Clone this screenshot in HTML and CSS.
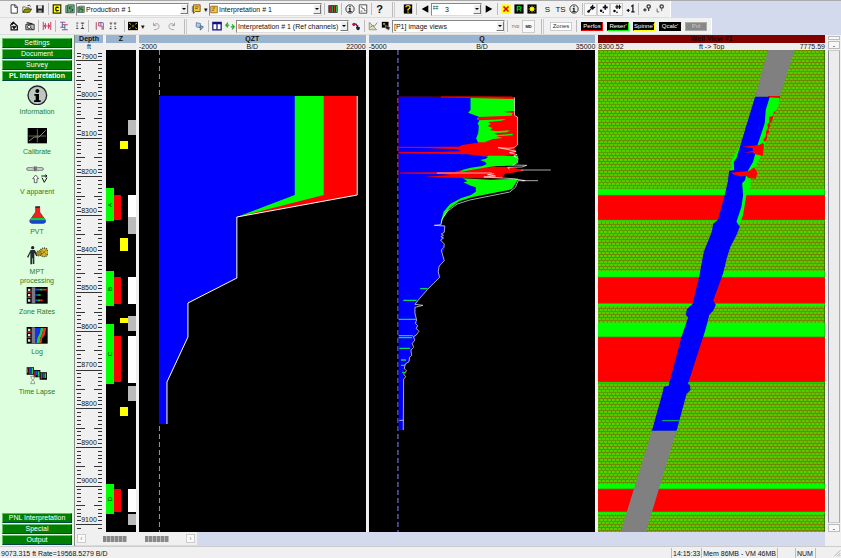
FILE: index.html
```html
<!DOCTYPE html>
<html lang="en">
<head>
    <meta charset="UTF-8">
    <meta name="viewport" content="width=device-width, initial-scale=1.0">
    <title>PL Interpretation</title>
    <link rel="stylesheet" href="styles.css">
</head>
<body>
    <div class="toolbars">
        <div class="toolbar">
            <button class="tool" aria-label="New"><svg viewBox="0 0 24 24"><path d="M5 2h10l5 5v15H5z" fill="#fff" stroke="#222" stroke-width="2"/><path d="M14 2v6h6" fill="none" stroke="#222" stroke-width="2"/></svg></button>
            <button class="tool" aria-label="Open"><svg viewBox="0 0 24 24"><path d="M2 20V7h6l2 2h7v4" fill="#ff9" stroke="#554" stroke-width="2"/><path d="M2 20l5-8h16l-5 8z" fill="#990" stroke="#330" stroke-width="2"/><path d="M13 4q5-3 8 2" fill="none" stroke="#222" stroke-width="2"/></svg></button>
            <button class="tool" aria-label="Save"><svg viewBox="0 0 24 24"><path d="M3 3h18v18H3z" fill="#222"/><path d="M7 3h10v8H7z" fill="#ddd"/><path d="M8 15h8v6H8z" fill="#999"/></svg></button>
            <span class="sep"></span>
            <button class="tool" aria-label="Company"><svg viewBox="0 0 24 24"><path d="M3 2h18v20H3z" fill="#ff0" stroke="#330" stroke-width="3"/><path d="M16 9q-7-4-7 3t7 3" fill="none" stroke="#000" stroke-width="3"/></svg></button>
            <button class="tool" aria-label="Survey"><svg viewBox="0 0 24 24"><path d="M2 4h4v17H2zM7 2h15v19H7z" fill="#7b8" stroke="#354" stroke-width="2"/><path d="M18 7h-7v5h7v5h-7" fill="none" stroke="#132" stroke-width="2"/></svg></button>
            <div class="combo combo-wide">
                <svg viewBox="0 0 24 24"><path d="M2 4h4v17H2zM7 2h15v19H7z" fill="#7b8" stroke="#354" stroke-width="2"/><path d="M18 7h-7v5h7v5h-7" fill="none" stroke="#132" stroke-width="2"/></svg>
                <select aria-label="Production survey"><option>Production # 1</option></select>
                <span class="arrow"></span>
            </div>
            <button class="tool" aria-label="Interpretations"><svg viewBox="0 0 24 24"><path d="M2 5h4v15H2z" fill="#888"/><path d="M6 2h16v16H10l-4 5z" fill="#ec3" stroke="#742" stroke-width="2"/><path d="M10 7h8M10 11h6" stroke="#742" stroke-width="2"/></svg></button>
            <button class="tool tool-drop" aria-label="More">▾</button>
            <div class="combo combo-wide">
                <svg viewBox="0 0 24 24"><path d="M2 2h20v20H2z" fill="#ec3" stroke="#742" stroke-width="2"/><path d="M8 5h8M7 10h8M6 15h6" stroke="#742" stroke-width="2"/></svg>
                <select aria-label="Interpretation"><option>Interpretation # 1</option></select>
                <span class="arrow"></span>
            </div>
            <span class="sep"></span>
            <button class="tool" aria-label="Tracks"><svg viewBox="0 0 24 24"><path d="M1 3h22v18H1z" fill="#111"/><path d="M5 5v14M15 5v14" stroke="#e33" stroke-width="3"/><path d="M10 5v14M20 5v14" stroke="#2c4" stroke-width="3"/></svg></button>
            <span class="sep"></span>
            <button class="tool" aria-label="Information"><svg viewBox="0 0 24 24"><circle cx="12" cy="12" r="10" fill="#eee" stroke="#222" stroke-width="2"/><path d="M12 5v3M9 11h3v7M8 18h8" fill="none" stroke="#222" stroke-width="3"/></svg></button>
            <button class="tool" aria-label="Report"><svg viewBox="0 0 24 24"><path d="M3 2h18v20H3z" fill="#fff" stroke="#333" stroke-width="2"/><path d="M6 7h4v4h5v5h4M6 17h5" fill="none" stroke="#555" stroke-width="2"/></svg></button>
            <span class="sep"></span>
            <button class="tool tool-glyph" aria-label="Help">?</button>
            <span class="grip"></span>
            <button class="tool" aria-label="What is this"><svg viewBox="0 0 24 24"><path d="M2 1h20v22H2z"/><path d="M7 8q0-4 5-4t5 4q0 3-5 5v3M12 18v3" fill="none" stroke="#fd0" stroke-width="3"/></svg></button>
            <span class="sep"></span>
            <button class="tool" aria-label="Previous"><svg viewBox="0 0 24 24"><path d="M20 3v18L4 12z"/></svg></button>
            <div class="combo combo-small">
                <svg viewBox="0 0 24 24"><path d="M3 3h16M3 9h16M6 0v13M15 0v13" stroke="#277" stroke-width="2"/></svg>
                <select aria-label="View number"><option>&nbsp; 3</option></select>
                <span class="arrow"></span>
            </div>
            <button class="tool" aria-label="Next"><svg viewBox="0 0 24 24"><path d="M4 3v18l16-9z"/></svg></button>
            <span class="sep"></span>
            <button class="tool" aria-label="Clear"><svg viewBox="0 0 24 24"><path d="M1 1h22v22H1z" fill="#ff0"/><path d="M6 6l12 12M18 6L6 18" stroke="#e00" stroke-width="4"/></svg></button>
            <button class="tool" aria-label="Rates"><svg viewBox="0 0 24 24"><path d="M1 1h22v22H1z"/><path d="M8 18V6h6q3 0 3 3t-3 3H8m5 0l4 6" fill="none" stroke="#0c2" stroke-width="3"/></svg></button>
            <button class="tool" aria-label="Highlight"><svg viewBox="0 0 24 24"><path d="M1 1h22v22H1z"/><path d="M12 4v16M4 12h16M6 6l12 12M18 6L6 18" stroke="#fe0" stroke-width="2"/><circle cx="12" cy="12" r="5" fill="#ff0"/></svg></button>
            <span class="gap"></span>
            <button class="tool tool-text">S</button>
            <button class="tool tool-text">TS</button>
            <button class="tool" aria-label="Details"><svg viewBox="0 0 24 24"><circle cx="12" cy="12" r="10" fill="#eee" stroke="#222" stroke-width="2"/><path d="M12 5v3M9 11h3v7M8 18h8" fill="none" stroke="#222" stroke-width="3"/></svg></button>
            <span class="sep"></span>
            <button class="tool pressed" aria-label="Add point"><svg viewBox="0 0 24 24"><circle cx="6" cy="18" r="3"/><path d="M6 18l8-8M10 8h12M16 2v12M13 5l6 6" stroke="#112" stroke-width="3"/></svg></button>
            <button class="tool pressed" aria-label="Move point"><svg viewBox="0 0 24 24"><circle cx="5" cy="16" r="3"/><path d="M9 8h12M15 2v12" stroke="#112" stroke-width="4"/><circle cx="10" cy="20" r="2"/></svg></button>
            <button class="tool pressed" aria-label="Add points"><svg viewBox="0 0 24 24"><circle cx="6" cy="17" r="3"/><path d="M8 7h14M12 2v10M18 2v10" stroke="#112" stroke-width="3"/><circle cx="12" cy="20" r="2"/></svg></button>
            <button class="tool" aria-label="Single point"><svg viewBox="0 0 24 24"><path d="M4 15h7M8 12v7" stroke="#112" stroke-width="3"/><path d="M15 6l4-3v16M15 19h8" fill="none" stroke="#112" stroke-width="3"/></svg></button>
            <span class="sep"></span>
            <button class="tool" aria-label="Lock point"><svg viewBox="0 0 24 24"><circle cx="16" cy="6" r="4" fill="none" stroke="#333" stroke-width="3"/><path d="M16 10v7M3 14h8M7 10v8" stroke="#333" stroke-width="3"/></svg></button>
            <button class="tool" aria-label="Unlock point"><svg viewBox="0 0 24 24"><circle cx="16" cy="6" r="4" fill="none" stroke="#333" stroke-width="3"/><path d="M16 10v7M5 11v8h5" fill="none" stroke="#555" stroke-width="2"/></svg></button>
        </div>
        <div class="toolbar">
            <button class="tool" aria-label="Load log"><svg viewBox="0 0 24 24"><path d="M3 11l7-8 10 9v9H5v-9" fill="#eee" stroke="#111" stroke-width="3"/><path d="M4 4l6 6M8 13h9l-5 6z" stroke="#111" stroke-width="2"/></svg></button>
            <span class="gap"></span>
            <button class="tool" aria-label="Browse data"><svg viewBox="0 0 24 24"><path d="M2 8h20v13H2z" fill="#bbb" stroke="#222" stroke-width="2"/><path d="M4 4l14 3" stroke="#222" stroke-width="3"/><circle cx="10" cy="14" r="4" fill="#fff" stroke="#222" stroke-width="2"/><path d="M14 17l5 4" stroke="#222" stroke-width="2"/></svg></button>
            <span class="sep"></span>
            <button class="tool" aria-label="Edit width"><svg viewBox="0 0 24 24"><path d="M3 2v20M21 2v20M8 5v14M16 5v14" stroke="#b24" stroke-width="2"/><path d="M4 12h16M9 8l-4 4 4 4M15 8l4 4-4 4" fill="none" stroke="#c35" stroke-width="2"/></svg></button>
            <span class="sep"></span>
            <button class="tool" aria-label="Depth match"><svg viewBox="0 0 24 24"><path d="M3 3h12M7 9h14M3 15h12M7 21h14" stroke="#a24" stroke-width="2"/><path d="M8 3v12M14 9v12" stroke="#36a" stroke-width="2"/></svg></button>
            <span class="gap"></span>
            <button class="tool" aria-label="Shift"><svg viewBox="0 0 24 24"><path d="M3 5h5M3 18h5M14 5h8M14 18h8" stroke="#222" stroke-width="2"/><path d="M5 9v6M18 6v11" stroke="#222" stroke-width="3" stroke-dasharray="2 2"/></svg></button>
            <span class="sep"></span>
            <span class="gap"></span>
            <button class="tool" aria-label="Stations"><svg viewBox="0 0 24 24"><path d="M3 3v18M9 3v9h8v9" fill="none" stroke="#a24" stroke-width="2"/><path d="M14 3v8M20 5v16M9 4h11" stroke="#649" stroke-width="2"/></svg></button>
            <button class="tool" aria-label="Pairs"><svg viewBox="0 0 24 24"><path d="M4 5h6M14 5h6M4 18h4M16 18h4" stroke="#222" stroke-width="2"/><path d="M7 6v14M17 6v14" stroke="#222" stroke-width="2" stroke-dasharray="3 3"/></svg></button>
            <span class="gap"></span>
            <span class="sep"></span>
            <button class="tool" aria-label="Zones"><svg viewBox="0 0 24 24"><path d="M0 2h24v20H0z"/><path d="M2 5l5 3M22 5l-5 3M2 19l5-3M22 19l-5-3" stroke="#ec0" stroke-width="2"/><path d="M9 9h6v6H9z" fill="#750"/></svg></button>
            <button class="tool tool-drop" aria-label="More">▾</button>
            <span class="gap"></span>
            <button class="tool" aria-label="Undo"><svg viewBox="0 0 24 24"><path d="M6 4v7h7M6 10q10-8 13 1t-12 10" fill="none" stroke="#999" stroke-width="2"/></svg></button>
            <span class="gap"></span>
            <button class="tool" aria-label="Redo"><svg viewBox="0 0 24 24"><path d="M18 4v7h-7M18 10Q8 2 5 11t12 10" fill="none" stroke="#999" stroke-width="2"/></svg></button>
            <span class="grip"></span>
            <button class="tool" aria-label="Templates"><svg viewBox="0 0 24 24"><path d="M3 4l10 2v10L3 14z" fill="#bcd" stroke="#57a" stroke-width="2"/><path d="M12 11l8 3-7 8z" fill="#8ac" stroke="#468" stroke-width="2"/></svg></button>
            <span class="sep"></span>
            <button class="tool" aria-label="Views"><svg viewBox="0 0 24 24"><path d="M2 3h20v18H2z" fill="#fff" stroke="#118" stroke-width="3"/><path d="M12 3v18M2 6h20" stroke="#118" stroke-width="3"/></svg></button>
            <button class="tool" aria-label="Refresh"><svg viewBox="0 0 24 24"><path d="M2 10h8M7 4l-5 6 5 5M22 14h-8M17 8l5 6-5 6" fill="none" stroke="#2a2" stroke-width="3"/></svg></button>
            <div class="combo combo-wide">
                <select aria-label="Reference channels"><option>Interpretation # 1 (Ref channels)</option></select>
                <span class="arrow"></span>
            </div>
            <button class="tool" aria-label="Link"><svg viewBox="0 0 24 24"><circle cx="7" cy="8" r="4" fill="#b13"/><path d="M11 6l5 8M16 10v11M12 16h9" stroke="#224" stroke-width="3"/><circle cx="17" cy="18" r="4" fill="#224"/></svg></button>
            <span class="sep"></span>
            <button class="tool" aria-label="Plot"><svg viewBox="0 0 24 24"><path d="M3 3v18h18z" fill="#dda" stroke="#888" stroke-width="2"/><path d="M6 15l6-5 3 3 7-9" fill="none" stroke="#57a" stroke-width="2"/></svg></button>
            <button class="tool" aria-label="Snapshot"><svg viewBox="0 0 24 24"><path d="M2 2h16v14H2z"/><path d="M5 5h5v4H5z" fill="#ba3"/><path d="M10 10l12 5-3 7-8-4z" fill="#222" stroke="#ddd"/></svg></button>
            <div class="combo combo-wide">
                <select aria-label="Image views"><option>[P1] image views</option></select>
                <span class="arrow"></span>
            </div>
            <span class="sep"></span>
            <button class="tool tool-mini off">TVD</button>
            <button class="tool tool-mini pressed">MD</button>
            <span class="grip"></span>
            <div class="tags">
                <button class="tag tag-zones">Zones</button>
                <span class="sep"></span>
                <button class="tag tag-red">Perfos</button>
                <button class="tag tag-green">Reser'</button>
                <button class="tag tag-yellow">Spinne'</button>
                <button class="tag">Qcalc'</button>
                <button class="tag tag-off">Pnl</button>
            </div>
        </div>
    </div>

    <div class="main">
        <nav class="sidebar">
            <button class="group">Settings</button>
            <button class="group">Document</button>
            <button class="group">Survey</button>
            <button class="group active">PL Interpretation</button>
            <div class="shortcuts">
                <a class="shortcut" href="#">
                    <svg viewBox="0 0 66 60"><circle cx="34" cy="31" r="28" fill="#bcc8bc" stroke="#223" stroke-width="4"/><circle cx="34" cy="18" r="6"/><path d="M25 27h14v19h5v5H24v-5h5V32h-4z"/></svg>
                    Information
                </a>
                <a class="shortcut" href="#">
                    <svg viewBox="0 0 66 60"><path d="M5 9h58v46H5z"/><path d="M8 33h52M34 12v40" stroke="#999" stroke-width="2"/><path d="M9 48l16-12h14l20-20" fill="none" stroke="#986" stroke-width="3"/></svg>
                    Calibrate
                </a>
                <a class="shortcut" href="#">
                    <svg viewBox="0 0 66 60"><rect x="2" y="8" width="50" height="8" rx="4" fill="#ddd" stroke="#444" stroke-width="2"/><path d="M20 5h14v14H20z" fill="#aaa"/><path d="M26 4v14M30 4v14" stroke="#333" stroke-width="2"/><path d="M29 30l9 11h-5v12h-8V41h-5z" fill="#fff" stroke="#222" stroke-width="2"/><path d="M48 38l7 14 8-14M46 33h17M58 29l5 4-5 4" fill="none" stroke="#111" stroke-width="3"/></svg>
                    V apparent
                </a>
                <a class="shortcut" href="#">
                    <svg viewBox="0 0 66 60"><path d="M29 6h12v15l17 24q2 10-6 10H18q-8 0-6-10l17-24z" fill="#e22" stroke="#622" stroke-width="2"/><path d="M16 39h39l4 8H11z" fill="#1c3"/><path d="M11 46h48q1 9-7 9H18q-8 0-7-9z" fill="#14d"/><path d="M28 6h14" stroke="#222" stroke-width="4"/></svg>
                    PVT
                </a>
                <a class="shortcut" href="#">
                    <svg viewBox="0 0 66 60"><circle cx="20" cy="8" r="5" fill="#222"/><path d="M14 15h13l8 17-4 2-6-11v34h-5V40h-2v18h-5V24L7 38l-4-2z" fill="#243030"/><circle cx="54" cy="22" r="13" fill="#db2" stroke="#332" stroke-width="4" stroke-dasharray="3 3"/><circle cx="39" cy="25" r="8" fill="#a82" stroke="#332" stroke-width="3" stroke-dasharray="3 3"/><path d="M46 14l16 16M62 14L46 30" stroke="#553" stroke-width="2"/></svg>
                    MPT processing
                </a>
                <a class="shortcut" href="#">
                    <svg viewBox="0 0 66 60"><path d="M2 6h63v50H2z"/><path d="M6 11h7v7H6zM6 27h7v7H6zM6 43h7v7H6z" fill="#ddd"/><path d="M17 7h11v48H17z" fill="#778"/><path d="M4 21h12M4 37h12" stroke="#d22" stroke-width="4"/><path d="M28 14h12M28 30h8M28 46h8" stroke="#15f" stroke-width="5"/><path d="M40 14h10M36 30h8M36 46h6" stroke="#1c3" stroke-width="5"/><path d="M50 14h12M42 46h8" stroke="#e22" stroke-width="5"/></svg>
                    Zone Rates
                </a>
                <a class="shortcut" href="#">
                    <svg viewBox="0 0 66 60"><path d="M2 6h63v50H2z"/><path d="M6 11h7v7H6zM6 27h7v7H6zM6 43h7v7H6z" fill="#ddd"/><path d="M17 7h10v48H17z" fill="#778"/><path d="M4 21h12M4 37h12" stroke="#d22" stroke-width="4"/><path d="M27 9h17l-3 16-7 14-2 15h-5z" fill="#13e"/><path d="M44 9h8l-3 18-6 12-2 15h-9l2-15 7-14z" fill="#2c4"/><path d="M52 9h9l-5 22-8 10-1 13h-6l2-15 6-12z" fill="#e32"/></svg>
                    Log
                </a>
                <a class="shortcut" href="#">
                    <svg viewBox="0 0 66 60"><path d="M2 7h22v22H2zM23 15h20v22H23zM41 22h22v22H41z"/><path d="M5 10v14M27 17v18M46 24v17" stroke="#e22" stroke-width="4"/><path d="M12 9v18M32 17v14M52 25v14" stroke="#15e" stroke-width="5"/><path d="M19 9v18M38 19v16M58 25v14" stroke="#2c5" stroke-width="5"/><path d="M13 34h14M13 56h14M15 34q0 7 5 11q-5 4-5 11M26 34q0 7-5 11q5 4 5 11" fill="none" stroke="#777" stroke-width="2"/></svg>
                    Time Lapse
                </a>
            </div>
            <button class="group">PNL Interpretation</button>
            <button class="group">Special</button>
            <button class="group">Output</button>
        </nav>

        <div class="work">
            <div class="tracks">
                <section class="track">
                    <h2>Depth</h2>
                    <div class="scale"><span></span><span>ft</span><span></span></div>
                    <div class="plot depth">
                        <svg viewBox="75 50 28 482" preserveAspectRatio="none"><path id="ticks" stroke="#333"/></svg>
                        <div class="depth-labels" id="depth-labels"></div>
                    </div>
                </section>
                <section class="track">
                    <h2>Z</h2>
                    <div class="scale"></div>
                    <div class="plot">
                        <svg viewBox="106 50 30 482" preserveAspectRatio="none">
                            <path fill="#0f0" d="M106 188h8v33h-8zM106 271h8v35h-8zM106 324h8v60h-8zM106 484h8v30h-8z"/>
                            <path fill="#f00" d="M114 195h7v25h-7zM114 277h7v27h-7zM114 336h7v46h-7zM114 489h7v23h-7z"/>
                            <path fill="#ff0" d="M120 141h8v8h-8zM120 238h8v13h-8zM120 318h8v5h-8zM120 407h8v9h-8z"/>
                            <path fill="#fff" d="M128 195h8v22h-8zM128 277h8v27h-8zM128 336h8v47h-8zM128 489h8v23h-8z"/>
                            <path fill="#bbb" d="M128 120h8v15h-8zM128 217h8v17h-8zM128 316h8v15h-8zM128 386h8v15h-8zM128 514h8v11h-8z"/>
                            <g class="zone-name">
                                <text transform="translate(112 205) rotate(-90)">A</text>
                                <text transform="translate(112 289) rotate(-90)">B</text>
                                <text transform="translate(112 354) rotate(-90)">C</text>
                                <text transform="translate(112 499) rotate(-90)">D</text>
                            </g>
                        </svg>
                    </div>
                </section>
                <section class="track">
                    <h2>QZT</h2>
                    <div class="scale"><span>-2000</span><span>B/D</span><span>22000</span></div>
                    <div class="plot">
                        <svg viewBox="139 50 227 482" preserveAspectRatio="none">
                            <path class="zero" d="M159.500 50v482"/>
                            <path fill="#f00" d="M159 96h198v99L237 217z"/>
                            <path fill="#0f0" d="M159 96h165v99L237 217z"/>
                            <path fill="#00f" d="M159 96h136v99l-58 22v61l-49 25v34l-21 45v42h-8z"/>
                            <path class="outline" d="M357.500 96v99L237 217v61l-49 25v34l-21 45v42"/>
                        </svg>
                    </div>
                </section>
                <section class="track">
                    <h2>Q</h2>
                    <div class="scale"><span>-5000</span><span>B/D</span><span>35000</span></div>
                    <div class="plot">
                        <svg viewBox="24 -120 681 1446" preserveAspectRatio="none">
                            <path class="zero zero-wide" d="M111 -120v1446"/>
                            <path fill="#f00" d="M113 20h270l78 2v54l9 5v84l-10 8 6 10-4 11-30 3-30 33-30 2 60-2 24 3 35 8-35 7-24 3-8 14H113z"/>
                            <path fill="#0f0" d="M329 24l132 3v36l-35 2 30 4-4 8-100 4v10l45-2 40-2-15 5-40 4 8 6-10 6 15 6-8 6 20 4 40-3-8 6-40 3 12 5 45-4v5l-50 3 20 5-30 3-25 10H320V24zM382 197h90l-3 20-12 10-60 2-100 17 50-36zM300 265l90 4 83-3-20 32-60 12-60 12-38 12-30 22-18 28-8 24V270z"/>
                            <path fill="#00f" d="M113 20h90l126 4v36l-7 8 18 7 14 5-6 7 8 5-6 8 4 8-2 22-6 15 6 13-48 7-10 5-161 2 157 6 10 6-187 5 207 4 62 7-7 6-17 4 14 5 6 7-13 6-35 5-40 10-10 4-162 2 132 4 20 3-80 4 115 4 15 10-12 3L330 287 345 292 345 305 330 315 300 325 268 342 248 365 240 395 240 404 252 406 250 425 241 430 246 445 239 455 251 470 249 482 241 490 250 512 235 528 232 545 236 562 218 580 200 598 172 630 162 652 165 690 170 705 165 740 156 755 150 785 145 815 133 825 128 850 127 1020H113z"/>
                            <path class="outline outline-wide" d="M461 22v54l9 5v84l-10 8-18 2-30-2 26 5 28 6-20 4 23 6-10 4 13 7-2 13-14 7 42 1-15 5-42 1 5 6M400 251l-20 3 24 4-35 3 90 5 34 6-21 0-8 20-17 14-60 12-60 12-38 12-30 22-16 24-3 16-20 2 32 2-2 19-9 5 7 4-8 4 8 4-9 6 11 12-1 10-8 8L250 512 235 528 232 545 236 562 218 580 200 598 172 630 162 643 186 646 162 652 162 670 167 690 163 700 170 707 166 715 174 724 166 735 157 740 162 750 154 760 158 772 150 780 152 796 146 802 144 815 133 822 130 836 137 842 128 852 134 860 128 868 127 1020"/>
                            <path stroke="#0d5" stroke-width="4" d="M178 596h22M127 631h40M113 688h52M113 737h43M113 743h40M115 775h32M120 810h15M120 826h12M124 847h10"/>
                            <path stroke="#f00" stroke-width="3" d="M114 172h180M113 188h200M118 249h180M240 21h215"/>
                            <path stroke="#fff" stroke-width="2" d="M228 249h165M480 240h90M482 272h50M115 991h12"/>
                        </svg>
                    </div>
                </section>
                <section class="track">
                    <h2 class="well-title">Well View #1</h2>
                    <div class="scale"><span>8300.52</span><span>ft -&gt; Top</span><span>7775.59</span></div>
                    <div class="plot">
                        <svg viewBox="24 -90 681 1446" preserveAspectRatio="none">
                            <defs>
                                <pattern id="brick" width="12" height="18" patternUnits="userSpaceOnUse">
                                    <path fill="#52cc00" d="M0 0h12v18H0z"/>
                                    <path fill="#6c8800" d="M0 0h12v3H0zM0 9h12v3H0z"/>
                                    <path fill="#907800" d="M3 0h3v9H3zM9 9h3v9H9z"/>
                                </pattern>
                                <pattern id="moire" width="50" height="48" patternUnits="userSpaceOnUse">
                                    <path fill="#2e0" fill-opacity="0.15" d="M0 16h50v14H0z"/>
                                </pattern>
                            </defs>
                            <path fill="url(#brick)" d="M24 -90h681v1446H24z"/>
                            <path fill="url(#moire)" d="M24 -90h681v1446H24z"/>
                            <path fill="#0f0" d="M24 326h681v99H24zM24 573h681v105H24zM24 728h681v182H24zM24 1212h681v91H24z"/>
                            <path fill="#f00" stroke="#7a6000" stroke-width="2" d="M23 346h684v74H23zM23 592h684v78H23zM23 771h684v135H23zM23 1227h684v68H23z"/>
                            <path fill="#808080" d="M535-90h80L570 50h-74zM186 1052h74l-92 304H92z"/>
                            <path fill="#0f0" d="M535 50l35 2-5 28-12 20-8 15-15 35-5 50-10 27-15 28-18 40v25l-12 25-10 60-15 40-20-20V240z"/>
                            <path fill="#f00" d="M535 48h36v6l-36-2zM553 94l5 2-8 8zM538 110l13-2-5 18-7 4 3 8-6 8 2 12-7 5 1 12-6 10-6-4 8-12 1-16 6-6-2-14 6-6z"/>
                            <path fill="#00f" d="M496 50l-56 185-8 10 1 25-15 3-4 32-9 40-21 75-14 12-4 23-24 60-14 75-20 82-17 16-3 18 7 6-20 58-39 147-14 3-5 22-31 110h74l30-110 12-12-2-15-6-3 51-157 7-25 6-25 12-13 8-18-8-12 30-82 12-50 10-30 18-35 10-25-10-15 15-45 5-35-3-35 9-10 4-20 20-35 15-55 20-60 3-40 12-40z"/>
                            <path fill="#f00" d="M458 200l50-5 12-7 3 8-4 32-25-6-6-5-26 2 28-7-2-8zM424 278l55-6 14-10 5 8 5 8-5 18-22-2-6-6-20 1-20-6z"/>
                            <path stroke="#0c4" stroke-width="3" d="M217 1022h50"/>
                        </svg>
                    </div>
                </section>
            </div>
            <div class="sheet-bar">
                <div class="sheets">
                    <button aria-label="Scroll left">‹</button>
                    <span class="sheet-grip"></span>
                    <span class="sheet-grip"></span>
                    <button aria-label="Scroll right">›</button>
                </div>
            </div>
        </div>

        <div class="scrollbar">
            <button aria-label="Split"></button>
            <button aria-label="Scroll up">-</button>
            <span class="thumb"></span>
            <button aria-label="Scroll down">-</button>
        </div>
    </div>

    <footer class="status">
        <span class="message">9073.315 ft Rate=19568.5279 B/D</span>
        <span>14:15:33</span>
        <span class="memory">Mem 86MB - VM 46MB</span>
        <span class="blank"></span>
        <span class="keys">NUM</span>
        <span class="blank"></span>
        <svg viewBox="0 0 12 12"><path d="M11 2L2 11M11 6l-5 5M11 9l-2 2" stroke="#999"/></svg>
    </footer>

    <script>
        // depth ruler, one tick every 10 ft
        let path = '';
        for (let depth = 7880; depth <= 9110; depth += 10) {
            const y = Math.round(99 + (depth - 8000) * 0.3865) + 0.5;
            if (depth % 100 === 0) {
                path += `M76 ${y}h26`;
            } else if (depth % 50 === 0) {
                path += `M76 ${y}h9M94 ${y}h8`;
            } else {
                path += `M77 ${y}h4M98 ${y}h4`;
            }
        }
        document.getElementById('ticks').setAttribute('d', path);

        const labels = document.getElementById('depth-labels');
        for (let depth = 7900; depth <= 9100; depth += 100) {
            const label = document.createElement('span');
            label.textContent = depth;
            labels.appendChild(label);
        }
    </script>
</body>
</html>
```
FILE: styles.css
```css
* {
    margin: 0;
    padding: 0;
    box-sizing: border-box;
}

body {
    min-height: 100vh;
    display: flex;
    flex-direction: column;
    background-color: #f0f0f0;
    color: #111;
    font-family: "Liberation Sans", Arial, sans-serif;
    font-size: 7px;
    line-height: 9px;
    overflow: hidden;
}

button,
select {
    font: inherit;
    color: inherit;
    border: none;
    background: none;
}

.toolbars {
    background-color: #d3daed;
    border-top: 1px solid #aaa;
    display: flex;
    flex-direction: column;
    align-items: flex-start;
}

.toolbar {
    height: 17px;
    padding: 0 4px 0 7px;
    display: flex;
    align-items: center;
    background-color: #f1f1f1;
    border-bottom: 1px solid #ddd;
    border-right: 1px solid #fff;
}

.tool {
    flex: none;
    width: 13px;
    height: 13px;
    display: flex;
    align-items: center;
    justify-content: center;
}

.tool svg {
    flex: none;
    width: 10px;
    height: 10px;
}

.tool-drop {
    width: 7px;
}

.tool-glyph {
    font-size: 11px;
    font-weight: bold;
}

.tool-text {
    font-size: 8px;
}

.tool-mini {
    font-size: 4px;
    font-weight: bold;
}

.pressed {
    background-color: #fafafa;
    border: 1px solid #ccc;
}

.off {
    color: #888;
}

.sep {
    flex: none;
    width: 1px;
    height: 12px;
    margin: 0 1px 0 2px;
    background-color: #bbb;
}

.gap {
    width: 3px;
}

.grip {
    flex: none;
    width: 3px;
    height: 15px;
    margin: 0 6px;
    border-left: 1px solid #bbb;
    border-right: 1px solid #ccc;
}

.combo {
    flex: none;
    height: 13px;
    display: flex;
    align-items: center;
    background-color: #fff;
    border: 1px solid #888;
    border-right-color: #ddd;
    border-bottom-color: #ddd;
}

.combo-wide {
    width: 113px;
}

.combo-small {
    width: 51px;
}

.combo svg {
    width: 8px;
    height: 9px;
}

.combo select {
    flex: 1;
    min-width: 0;
    appearance: none;
    padding-left: 1px;
}

.arrow {
    width: 8px;
    height: 10px;
    background-color: #eee;
    border: 1px solid #fff;
    border-right-color: #777;
    border-bottom-color: #777;
    display: flex;
    align-items: center;
    justify-content: center;
}

.arrow::after {
    content: "";
    border: 2px solid transparent;
    border-top-color: #000;
    border-bottom: none;
}

.tags {
    display: flex;
    align-items: center;
    gap: 4px;
}

.tags .sep {
    margin: 0;
}

.tag {
    width: 22px;
    height: 9px;
    background-color: #000;
    color: #fff;
    border: 1px solid #000;
    font-size: 6px;
    line-height: 7px;
    white-space: nowrap;
}

.tag-zones {
    background-color: #fff;
    color: #333;
    border-color: #ccc;
}

.tag-red {
    border-right-color: #f00;
    border-bottom-color: #f00;
}

.tag-green {
    border-right-color: #0f0;
    border-bottom-color: #0f0;
}

.tag-yellow {
    border-right-color: #ff0;
    border-bottom-color: #ff0;
}

.tag-off {
    background-color: #888;
    border-color: #aaa;
    color: #ccc;
}

.main {
    flex: 1;
    display: flex;
    min-height: 0;
}

.sidebar {
    flex: none;
    width: 75px;
    padding: 3px 2px 1px;
    display: flex;
    flex-direction: column;
    gap: 1px;
    background-color: #dfd;
    border-right: 1px solid #888;
}

.group {
    height: 10px;
    background-color: #008000;
    color: #fff;
    border: 1px solid #6b6;
    border-right-color: #044;
    border-bottom-color: #044;
    line-height: 8px;
}

.group.active {
    font-weight: bold;
}

.shortcuts {
    flex: 1;
    padding-top: 3px;
}

.shortcut {
    height: 40px;
    padding: 0 10px;
    display: flex;
    flex-direction: column;
    align-items: center;
    gap: 2px;
    color: #2a7a2a;
    text-align: center;
    text-decoration: none;
}

.shortcut svg {
    flex: none;
    width: 22px;
    height: 20px;
}

.work {
    flex: 1;
    min-width: 0;
    display: flex;
    flex-direction: column;
}

.tracks {
    flex: 1;
    display: grid;
    grid-template-columns: 28px 30px 1fr 1fr 1fr;
    gap: 3px;
    min-height: 0;
}

.track {
    display: flex;
    flex-direction: column;
    min-width: 0;
    min-height: 0;
}

.track h2 {
    height: 8px;
    background-color: #9ab3cf;
    font-size: 7px;
    font-weight: bold;
    line-height: 8px;
    text-align: center;
}

.track .well-title {
    background-color: #800000;
    color: #200;
}

.scale {
    height: 7px;
    display: grid;
    grid-template-columns: 1fr auto 1fr;
    background-color: #eee;
    line-height: 7px;
}

.scale span:last-child {
    text-align: right;
}

.plot {
    flex: 1;
    min-height: 0;
    position: relative;
    background-color: #000;
}

.plot svg {
    position: absolute;
    width: 100%;
    height: 100%;
}

.depth {
    background-color: #f0f0f0;
}

.depth-labels {
    position: absolute;
    width: 100%;
    height: 100%;
    display: grid;
    grid-template-rows: 21fr repeat(12, 77fr) 16fr;
    text-align: center;
}

.depth-labels span {
    min-height: 0;
    display: flex;
    align-items: flex-end;
    justify-content: center;
}

.zone-name {
    font-size: 6px;
    text-anchor: middle;
}

.zero {
    fill: none;
    stroke: #88f;
    stroke-dasharray: 5 3;
}

.zero-wide {
    stroke-width: 3;
    stroke-dasharray: 15 9;
}

.outline {
    fill: none;
    stroke: #fff;
}

.outline-wide {
    stroke-width: 2;
}

.sheet-bar {
    height: 14px;
    background-color: #d3daed;
}

.sheets {
    width: 122px;
    height: 13px;
    padding: 2px;
    display: flex;
    align-items: center;
    justify-content: space-between;
    background-color: #f0f0f0;
}

.sheets button {
    width: 9px;
    height: 9px;
    border: 1px solid #ccc;
    background-color: #fafafa;
    color: #888;
    line-height: 6px;
}

.sheet-grip {
    width: 24px;
    height: 6px;
    background: repeating-linear-gradient(90deg, #888 0 3px, #bbb 3px 4px);
}

.scrollbar {
    flex: none;
    width: 16px;
    padding: 1px 1px 14px 3px;
    display: flex;
    flex-direction: column;
    gap: 1px;
}

.scrollbar button {
    height: 8px;
    border: 1px solid #bbb;
    background-color: #f8f8f8;
    line-height: 5px;
}

.scrollbar button:first-child {
    height: 4px;
}

.thumb {
    flex: 1;
    background-color: #ececec;
    border: 1px solid #ccc;
    border-left-color: #889;
    border-right-color: #aaa;
}

.status {
    height: 12px;
    display: flex;
    align-items: center;
    border-top: 1px solid #ccc;
    white-space: nowrap;
}

.status span {
    height: 10px;
    padding: 0 1px;
    line-height: 11px;
    border-left: 1px solid #bbb;
    min-width: 30px;
}

.status .message {
    flex: 1;
    border-left: none;
}

.status .memory {
    min-width: 75px;
}

.status .keys {
    min-width: 20px;
}

.status .blank {
    min-width: 18px;
}

.status svg {
    width: 8px;
    height: 10px;
}
```
